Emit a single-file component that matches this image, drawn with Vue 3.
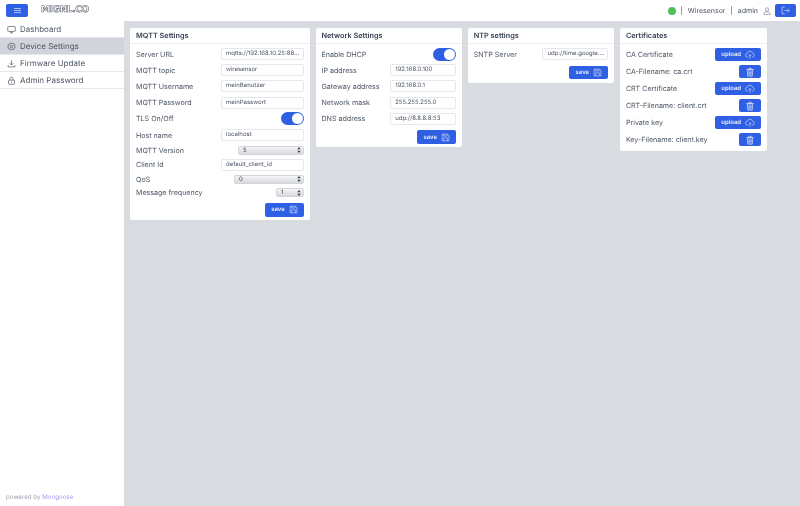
<script setup>
const nav = [
  { label: 'Dashboard', icon: 'monitor' },
  { label: 'Device Settings', icon: 'gear', active: true },
  { label: 'Firmware Update', icon: 'download' },
  { label: 'Admin Password', icon: 'lock' },
]
const mqtt = [
  { label: 'Server URL', type: 'input', value: 'mqtts://192.168.10.25:88...' },
  { label: 'MQTT topic', type: 'input', value: 'wiresensor' },
  { label: 'MQTT Username', type: 'input', value: 'meinBenutzer' },
  { label: 'MQTT Password', type: 'input', value: 'meinPasswort' },
  { label: 'TLS On/Off', type: 'toggle' },
  { label: 'Host name', type: 'input', value: 'localhost' },
  { label: 'MQTT Version', type: 'select', value: '5', width: '66px' },
  { label: 'Client Id', type: 'input', value: 'default_client_id' },
  { label: 'QoS', type: 'select', value: '0', width: '70px' },
  { label: 'Message frequency', type: 'select', value: '1', width: '28px' },
]
const network = [
  { label: 'Enable DHCP', type: 'toggle' },
  { label: 'IP address', type: 'input', value: '192.168.0.100' },
  { label: 'Gateway address', type: 'input', value: '192.168.0.1' },
  { label: 'Network mask', type: 'input', value: '255.255.255.0' },
  { label: 'DNS address', type: 'input', value: 'udp://8.8.8.8:53' },
]
const ntp = [{ label: 'SNTP Server', type: 'input', value: 'udp://time.google....' }]
const certs = [
  { label: 'CA Certificate', upload: true },
  { label: 'CA-Filename: ca.crt' },
  { label: 'CRT Certificate', upload: true },
  { label: 'CRT-Filename: client.crt' },
  { label: 'Private key', upload: true },
  { label: 'Key-Filename: client.key' },
]
const cards = [
  { title: 'MQTT Settings', rows: mqtt, cls: 'w-mqtt' },
  { title: 'Network Settings', rows: network, cls: 'w-net' },
  { title: 'NTP settings', rows: ntp, cls: 'w-ntp' },
]
</script>

<template>
  <div class="page">
    <header class="topbar">
      <div class="top-left">
        <button class="btn menu-btn" aria-label="menu">
          <svg width="7" height="5" viewBox="0 0 7 5" fill="none" stroke="#b9c9f8" stroke-width="0.9"><path d="M0 .5h7M0 2.500h7M0 4.500h7" /></svg>
        </button>
        <span class="logo">MIGNL.CO</span>
      </div>
      <div class="top-right">
        <span class="dot"></span>
        <span>|</span>
        <span>Wiresensor</span>
        <span>|</span>
        <span>admin</span>
        <svg class="user" width="8" height="8" viewBox="0 0 24 24" fill="none" stroke="#6b7280" stroke-width="1.8"><circle cx="12" cy="7.5" r="5" /><path d="M3 23v-3c0-3.500 3.500-5.500 9-5.500s9 2 9 5.500v3z" /></svg>
        <button class="btn logout" aria-label="log out">
          <svg width="9" height="9" viewBox="0 0 24 24" fill="none" stroke="#c7d4fa" stroke-width="2"><path d="M10 3H3v18h7M9 12h13M17 7l5 5-5 5" /></svg>
        </button>
      </div>
    </header>
    <div class="body">
      <aside class="sidebar">
        <nav>
          <a v-for="n in nav" :key="n.label" class="nav-item" :class="{ active: n.active }">
            <svg width="9" height="9" viewBox="0 0 24 24" fill="none" stroke="#4b5563" stroke-width="1.8">
              <g v-if="n.icon === 'monitor'"><rect x="2" y="4" width="20" height="13" rx="1.5" /><path d="M8 21h8M12 17v4" /></g>
              <g v-else-if="n.icon === 'gear'"><circle cx="12" cy="12" r="3.5" /><path d="M12 2l2.200 2.600 3.400-.7 1 3.300 3.200 1.300-1.200 3.500 1.200 3.500-3.200 1.300-1 3.300-3.400-.7L12 22l-2.200-2.600-3.400.7-1-3.300-3.200-1.300 1.200-3.500-1.200-3.500 3.200-1.300 1-3.300 3.400.7z" /></g>
              <g v-else-if="n.icon === 'download'"><path d="M3 16v5h18v-5M12 3v13M7 11l5 5 5-5" /></g>
              <g v-else><rect x="4" y="11" width="16" height="11" rx="1.5" /><path d="M8 11V7a4 4 0 0 1 8 0v4M12 15v3" /></g>
            </svg>
            <span>{{ n.label }}</span>
          </a>
        </nav>
        <div class="powered">powered by <span class="link">Mongoose</span></div>
      </aside>
      <main class="content">
        <section v-for="c in cards" :key="c.title" class="card" :class="c.cls">
          <h2 class="card-title">{{ c.title }}</h2>
          <div class="card-body">
            <div v-for="r in c.rows" :key="r.label" class="row" :class="'row-' + r.type">
              <span class="label">{{ r.label }}</span>
              <span v-if="r.type === 'input'" class="input">{{ r.value }}</span>
              <span v-else-if="r.type === 'select'" class="select" :style="{ width: r.width }">
                <span>{{ r.value }}</span>
                <svg width="4" height="6" viewBox="0 0 4 7" fill="#374151"><path d="M2 0l2 2.600H0zM2 7L0 4.400h4z" /></svg>
              </span>
              <span v-else class="toggle"><span class="knob"></span></span>
            </div>
            <div class="actions">
              <button class="btn save">
                <span>save</span>
                <svg width="9" height="9" viewBox="0 0 24 24" fill="none" stroke="#c7d4fa" stroke-width="1.8"><path d="M3 3h15l3 3v15H3zM7 3v5h9V3M7 21v-8h10v8" /></svg>
              </button>
            </div>
          </div>
        </section>
        <section class="card w-cert">
          <h2 class="card-title">Certificates</h2>
          <div class="card-body cert-body">
            <div v-for="r in certs" :key="r.label" class="cert-row">
              <span class="label">{{ r.label }}</span>
              <button v-if="r.upload" class="btn upload">
                <span>upload</span>
                <svg width="10" height="10" viewBox="0 0 24 24" fill="none" stroke="#c7d4fa" stroke-width="1.7"><path d="M7 17H6a4.500 4.500 0 0 1-.5-9 6.500 6.500 0 0 1 12.700-.3A4.700 4.700 0 0 1 18 17h-1M12 21V11M8.500 14.500 12 11l3.500 3.500" /></svg>
              </button>
              <button v-else class="btn trash" aria-label="delete">
                <svg width="10" height="10" viewBox="0 0 24 24" fill="#c7d4fa" fill-opacity="0.35" stroke="#c7d4fa" stroke-width="1.8"><path d="M3 6h18M9 6V3h6v3M5.500 6l1 16h11l1-16zM10 11v7M14 11v7" /></svg>
              </button>
            </div>
          </div>
        </section>
      </main>
    </div>
  </div>
</template>

<style>
html, body { margin: 0; padding: 0; }
</style>

<style scoped>
.page {
  width: 800px;
  height: 506px;
  display: flex;
  flex-direction: column;
  overflow: hidden;
  background: #d8dbdf;
  color: #4b5563;
  font-family: Inter, "Liberation Sans", sans-serif;
  font-size: 7.100px;
  text-rendering: geometricPrecision;
  filter: blur(0.35px);
}
.topbar {
  height: 21px;
  flex: none;
  background: #fff;
  display: flex;
  align-items: center;
  justify-content: space-between;
  padding: 0 4px 0 6px;
}
.top-left, .top-right { display: flex; align-items: center; }
.btn {
  border: 0;
  padding: 0;
  margin: 0;
  background: #2f5fe3;
  color: #e8edff;
  border-radius: 2px;
  display: flex;
  align-items: center;
  justify-content: center;
  font: 600 6px Inter, "Liberation Sans", sans-serif;
  text-rendering: geometricPrecision;
}
.menu-btn { width: 22px; height: 13px; }
.logo {
  margin: -1px 0 0 13px;
  font: 700 9px "DejaVu Sans", sans-serif;
  color: #fff;
  -webkit-text-stroke: 0.55px #5b616c;
  letter-spacing: -0.35px;
}
.top-right { gap: 5px; font-size: 7px; color: #4b5563; }
.dot { flex: none; width: 8px; height: 8px; border-radius: 50%; background: #4cc35a; }
.user { margin-right: -1px; }
.logout { width: 21px; height: 13px; }
.body { flex: 1; display: flex; min-height: 0; }
.sidebar {
  width: 124px;
  flex: none;
  background: #fff;
  display: flex;
  flex-direction: column;
  justify-content: space-between;
}
.nav-item {
  box-sizing: border-box;
  height: 17px;
  display: flex;
  align-items: center;
  gap: 4px;
  padding-left: 7px;
  border-bottom: 1px solid #e5e7eb;
  color: #4b5563;
  font-size: 8px;
}
.nav-item.active { background: #d1d5db; }
.powered { padding: 0 0 5px 6px; font-size: 6.200px; color: #9ca3af; }
.link { color: #a5a0f0; }
.content {
  flex: 1;
  display: flex;
  align-items: flex-start;
  gap: 5.500px;
  padding: 7px 0 0 6px;
}
.card {
  background: #fff;
  border-radius: 2px;
  flex: none;
}
.w-mqtt { width: 180px; }
.w-net { width: 146.700px; }
.w-ntp { width: 146.700px; }
.w-cert { width: 147.300px; }
.card-title {
  box-sizing: border-box;
  margin: 0;
  height: 16px;
  line-height: 15px;
  padding: 0 6px;
  font-size: 7.300px;
  font-weight: 600;
  color: #374151;
  border-bottom: 1px solid #eceef1;
}
.card-body { padding: 2px 6px 3.500px; }
.row {
  height: 16.200px;
  display: flex;
  align-items: center;
  justify-content: space-between;
}
.row-select { height: 14px; }
.row-select + .row-input { height: 15px; }
.row-select + .row-select { height: 13.500px; }
.label { white-space: nowrap; color: #4b5563; }
.input {
  box-sizing: border-box;
  width: 83px;
  height: 12px;
  line-height: 10.500px;
  padding: 0 4px;
  font-size: 6px;
  color: #4b5563;
  background: #fff;
  border: 1px solid #e5e7eb;
  border-radius: 2px;
  white-space: nowrap;
  overflow: hidden;
}
.w-net .input, .w-ntp .input { width: 66px; }
.select {
  box-sizing: border-box;
  height: 9px;
  padding: 0 2px 0 4px;
  display: flex;
  align-items: center;
  justify-content: space-between;
  font-size: 6px;
  color: #374151;
  border-radius: 2px;
  border: 1px solid #d1d5db;
  background: linear-gradient(#f4f4f5, #d9dadd);
}
.toggle {
  width: 23px;
  height: 13px;
  border-radius: 7px;
  background: #2f5fe3;
  display: flex;
  align-items: center;
  justify-content: flex-end;
  padding-right: 1px;
  box-sizing: border-box;
}
.knob { width: 11px; height: 11px; border-radius: 50%; background: #fff; }
.actions { display: flex; justify-content: flex-end; padding-top: 3.500px; }
.save { width: 39px; height: 13.500px; gap: 4px; }
.cert-body { padding: 2px 6px 3px; }
.cert-row {
  height: 17px;
  display: flex;
  align-items: center;
  justify-content: space-between;
}
.upload { width: 46px; height: 13px; gap: 4px; }
.trash { width: 22px; height: 13px; }
</style>
